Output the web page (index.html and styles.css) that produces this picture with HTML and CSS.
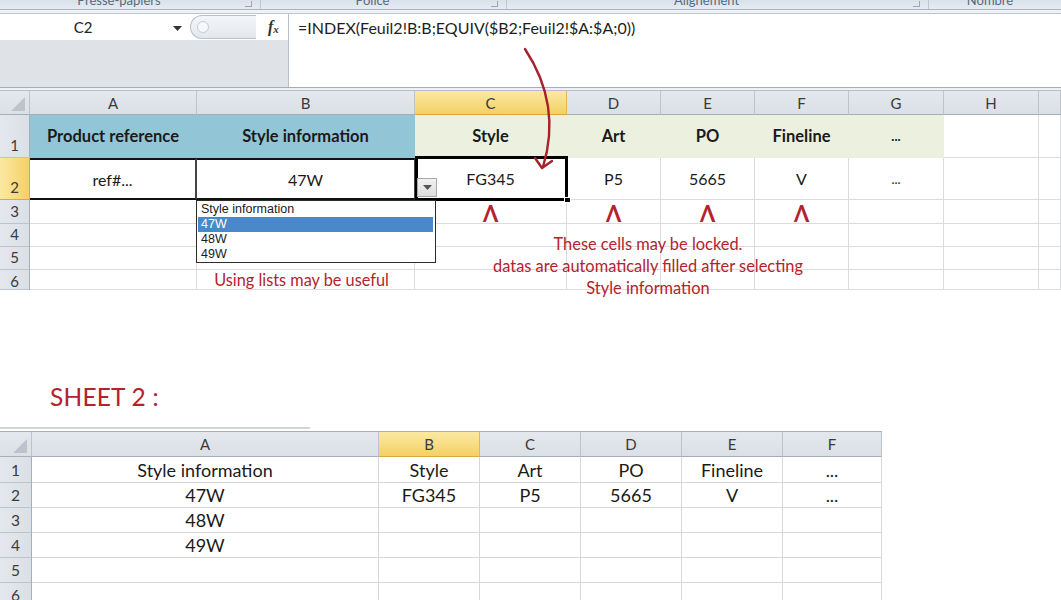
FILE: index.html
```html
<!DOCTYPE html>
<html>
<head>
<meta charset="utf-8">
<link rel="stylesheet" href="styles.css">
</head>
<body>
<div class="page">
  <div class="ribbon">
    <div class="grp g1"><span>Presse-papiers</span><i class="launch"></i></div>
    <div class="grp g2"><span>Police</span><i class="launch"></i></div>
    <div class="grp g3"><span>Alignement</span><i class="launch"></i></div>
    <div class="grp g4"><span>Nombre</span></div>
  </div>
  <div class="ribbon-gap"></div>
  <div class="fbar">
    <div class="fleft">
      <div class="namerow">
        <div class="namebox"><span class="name">C2</span><svg class="nb-caret" width="9" height="5" viewBox="0 0 9 5"><path d="M0 0H9L4.5 5Z" fill="#333"/></svg></div>
        <div class="fxzone">
          <div class="pill"><i class="knob"></i></div>
          <span class="fx">f<sub>x</sub></span>
        </div>
      </div>
    </div>
    <div class="formula">=INDEX(Feuil2!B:B;EQUIV($B2;Feuil2!$A:$A;0))</div>
  </div>
  <div class="fsep"></div>

  <div class="sheet s1">
    <div class="grid g-s1">
      <div class="c h corner"><i class="tri"></i></div>
      <div class="c h">A</div>
      <div class="c h">B</div>
      <div class="c h sel">C</div>
      <div class="c h">D</div>
      <div class="c h">E</div>
      <div class="c h">F</div>
      <div class="c h">G</div>
      <div class="c h">H</div>
      <div class="c h"></div>

      <div class="c r">1</div>
      <div class="c b blue">Product reference</div>
      <div class="c b blue">Style information</div>
      <div class="c b green">Style</div>
      <div class="c b green">Art</div>
      <div class="c b green">PO</div>
      <div class="c b green">Fineline</div>
      <div class="c b green dots">...</div>
      <div class="c"></div>
      <div class="c"></div>

      <div class="c r sel">2</div>
      <div class="c t boxed bx-a">ref#...</div>
      <div class="c t boxed bx-b">47W</div>
      <div class="c t">FG345</div>
      <div class="c t">P5</div>
      <div class="c t">5665</div>
      <div class="c t">V</div>
      <div class="c t dots">...</div>
      <div class="c"></div>
      <div class="c"></div>

      <div class="c r">3</div>
      <div class="c"></div>
      <div class="c"></div>
      <div class="c caret">Λ</div>
      <div class="c caret">Λ</div>
      <div class="c caret">Λ</div>
      <div class="c caret">Λ</div>
      <div class="c"></div>
      <div class="c"></div>
      <div class="c"></div>

      <div class="c r">4</div>
      <div class="c"></div><div class="c"></div><div class="c"></div><div class="c"></div><div class="c"></div><div class="c"></div><div class="c"></div><div class="c"></div><div class="c"></div>

      <div class="c r">5</div>
      <div class="c"></div><div class="c"></div><div class="c"></div><div class="c"></div><div class="c"></div><div class="c"></div><div class="c"></div><div class="c"></div><div class="c"></div>

      <div class="c r r6">6</div>
      <div class="c"></div>
      <div class="c note-cell">Using lists may be useful</div>
      <div class="c"></div><div class="c"></div><div class="c"></div><div class="c"></div><div class="c"></div><div class="c"></div><div class="c"></div>
    </div>

    <div class="selection"><i class="handle"></i></div>
    <div class="dd-btn"><svg width="9" height="5" viewBox="0 0 9 5"><path d="M0 0H9L4.5 5Z" fill="#555"/></svg></div>
    <div class="dd-list">
      <div class="dd-item">Style information</div>
      <div class="dd-item on">47W</div>
      <div class="dd-item">48W</div>
      <div class="dd-item">49W</div>
    </div>
    <div class="note">
      These cells may be locked.<br>
      datas are automatically filled after selecting<br>
      Style information
    </div>
  </div>

  <div class="title2">SHEET 2 :</div>

  <div class="topline2"></div>
  <div class="sheet s2">
    <div class="grid g-s2">
      <div class="c h corner"><i class="tri"></i></div>
      <div class="c h">A</div>
      <div class="c h sel">B</div>
      <div class="c h">C</div>
      <div class="c h">D</div>
      <div class="c h">E</div>
      <div class="c h">F</div>

      <div class="c r">1</div>
      <div class="c v">Style information</div>
      <div class="c v">Style</div>
      <div class="c v">Art</div>
      <div class="c v">PO</div>
      <div class="c v">Fineline</div>
      <div class="c v dots">...</div>

      <div class="c r">2</div>
      <div class="c v">47W</div>
      <div class="c v">FG345</div>
      <div class="c v">P5</div>
      <div class="c v">5665</div>
      <div class="c v">V</div>
      <div class="c v dots">...</div>

      <div class="c r">3</div>
      <div class="c v">48W</div>
      <div class="c"></div><div class="c"></div><div class="c"></div><div class="c"></div><div class="c"></div>

      <div class="c r">4</div>
      <div class="c v">49W</div>
      <div class="c"></div><div class="c"></div><div class="c"></div><div class="c"></div><div class="c"></div>

      <div class="c r">5</div>
      <div class="c"></div><div class="c"></div><div class="c"></div><div class="c"></div><div class="c"></div><div class="c"></div>

      <div class="c r">6</div>
      <div class="c"></div><div class="c"></div><div class="c"></div><div class="c"></div><div class="c"></div><div class="c"></div>
    </div>
  </div>

  <svg class="arrow" width="1061" height="600" viewBox="0 0 1061 600">
    <path d="M525 49 Q562 105 543 167" fill="none" stroke="#a8202a" stroke-width="2.4" stroke-linecap="round"/>
    <path d="M535 158 L542 168 L552 161" fill="none" stroke="#a8202a" stroke-width="2.4" stroke-linecap="round" stroke-linejoin="round"/>
  </svg>
</div>
</body>
</html>
```

FILE: styles.css
```css
* { box-sizing: border-box; }
html, body { margin: 0; padding: 0; background: #fff; }
body { font-family: Lato, "Open Sans", sans-serif; color: #1e1e1e; }
.page { position: relative; width: 1061px; height: 600px; overflow: hidden; }

/* ribbon */
.ribbon {
  height: 10px; display: flex; overflow: hidden;
  background: linear-gradient(#d9e1ea, #e6ebf1);
  border-bottom: 1px solid #aab3be;
}
.grp {
  position: relative; display: flex; justify-content: center; padding-right: 22px;
  border-right: 1px solid #bcc5d0; font-size: 13px; color: #566a83;
}
.grp span { margin-top: -8px; }
.g1 { width: 261px; }
.g2 { width: 246px; }
.g3 { width: 422px; }
.g4 { flex: 1; border-right: none; padding-right: 10px; }
.launch {
  position: absolute; right: 8px; top: 1px; width: 7px; height: 6px;
  border: 1px solid #9aa7b6; border-left: none; border-top: none;
}
.ribbon-gap { height: 4px; background: #eef1f5; border-bottom: 1px solid #bfc6cf; }

/* formula bar */
.fbar { height: 73px; display: flex; background: #fff; }
.fleft {
  width: 289px; background: #dfe3e8; border-right: 1px solid #b9c0c8;
}
.namerow { height: 26px; display: flex; }
.namebox {
  width: 188px; background: #fff; position: relative;
  display: flex; align-items: center; justify-content: center;
}
.name { font-size: 15px; color: #222; margin-left: -22px; }
.nb-caret { position: absolute; right: 6px; top: 12px; }
.fxzone {
  flex: 1; display: flex; align-items: center; background: #fff; position: relative;
}
.pill {
  width: 66px; height: 24px; margin-left: 2px;
  border: 1px solid #b8c0ca; border-right: none; border-radius: 12px 0 0 12px;
  background: linear-gradient(#f4f6f8, #e3e7ec); position: relative;
}
.knob {
  position: absolute; left: 6px; top: 5px; width: 12px; height: 12px;
  border-radius: 50%; border: 1px solid #c5ccd5; background: #f7f8fa;
}
.fx {
  margin-left: 12px; font-family: "Liberation Serif", serif; font-style: italic; font-weight: bold;
  font-size: 16px; color: #333;
}
.fx sub { font-size: 11px; vertical-align: -1px; }
.formula {
  flex: 1; padding: 4px 0 0 9px; font-size: 16px; color: #1e1e1e;
}
.fsep {
  height: 4px; background: #eef0f3;
  border-top: 1px solid #a6aeb8; border-bottom: 1px solid #b7bec7;
}

/* grid common */
.sheet { position: relative; }
.grid { display: grid; }
.c {
  display: flex; align-items: center; justify-content: center;
  border-right: 1px solid #dadcde; border-bottom: 1px solid #dadcde;
  white-space: nowrap; overflow: visible; min-width: 0;
}
.h {
  background: linear-gradient(#e4e8ed, #dbe0e6);
  border-right: 1px solid #bcc3cc; border-bottom: 1px solid #a4afbc;
  font-size: 15px; color: #3a3a3a;
}
.r {
  background: linear-gradient(90deg, #e4e8ed, #dbe0e6);
  border-right: 1px solid #a4afbc; border-bottom: 1px solid #bcc3cc;
  font-size: 15px; color: #3a3a3a;
}
.sel {
  background: linear-gradient(#fbe9a2, #f4d065);
  border-right-color: #e2b84f; border-bottom-color: #d9a93b;
}
.r.sel { background: linear-gradient(90deg, #fbe9a2, #f4d065); border-right-color: #d9a93b; }
.corner { position: relative; }
.tri {
  position: absolute; right: 4px; bottom: 3px; width: 0; height: 0;
  border-left: 14px solid transparent; border-bottom: 14px solid #bcc3cc;
}

/* sheet 1 */
.g-s1 {
  grid-template-columns: 30px 167px 218px 152px 94px 94px 94px 95px 95px 1fr;
  grid-template-rows: 24px 43px 42px 24px 23px 23px 20px;
}
.s1 .r { align-items: flex-end; padding-bottom: 3px; }
.s1 .r.r6 { padding-bottom: 0; align-items: flex-start; padding-top: 2px; }
.b { font-weight: bold; font-size: 16.5px; color: #1a1a1a; }
.blue { background: #92c6d6; border-color: #92c6d6; }
.green { background: #ebf1de; border-color: #ebf1de; }
.t { font-size: 16px; color: #1a1a1a; }
.dots { font-size: 13px; }
.boxed { border-top: 2px solid #111; border-bottom: 2px solid #111; }
.bx-a { border-right: 2px solid #444; }
.bx-b { border-right: 1px solid #444; }
.caret { color: #b3232c; font-weight: bold; font-size: 22px; padding-top: 3px; }
.note-cell { color: #b3232c; font-size: 16.3px; align-items: flex-end; overflow: visible; padding-right: 8px; }

.selection {
  position: absolute; left: 415px; top: 65px; width: 153px; height: 45px;
  border: 3px solid #000;
}
.handle {
  position: absolute; right: -6px; bottom: -5px; width: 7px; height: 6px;
  background: #000; border: 1px solid #fff;
}
.dd-btn {
  position: absolute; left: 417px; top: 87px; width: 20px; height: 19px;
  background: linear-gradient(#f1f1f1, #dedede); border: 1px solid #a9a9a9;
  display: flex; align-items: center; justify-content: center;
}
.dd-list {
  position: absolute; left: 196px; top: 109px; width: 240px; height: 63px;
  background: #fff; border: 1px solid #2c2c2c; padding: 1px 2px 0 1px;
  font-family: "Liberation Sans", Arial, sans-serif; font-size: 12.5px; color: #1a1a1a;
}
.dd-item { height: 15px; line-height: 15px; padding-left: 3px; }
.dd-item.on { background: #4a89c9; color: #fff; }
.note {
  position: absolute; left: 448px; top: 142px; width: 400px;
  text-align: center; color: #b3232c; font-size: 16.4px; line-height: 22px;
}

/* sheet 2 */
.title2 {
  height: 137px; padding: 92px 0 0 50px;
  font-size: 24.5px; color: #b3232c; letter-spacing: 0.2px;
}
.topline2 { width: 310px; height: 2px; background: #d2d6dc; }
.s2 { width: 882px; border-top: 1px solid #a7afb9; margin-top: 2px; }
.g-s2 {
  grid-template-columns: 32px 347px 101px 101px 101px 101px 99px;
  grid-template-rows: 25px 26px 25px 25px 25px 25px 25px;
}
.s2 .c { border-color: #d8d8d8; }
.s2 .h { border-right-color: #bcc3cc; border-bottom-color: #a4afbc; }
.s2 .h.sel { border-right-color: #e2b84f; border-bottom-color: #d9a93b; }
.s2 .r { border-right-color: #a4afbc; border-bottom-color: #bcc3cc; font-size: 15.5px; }
.v { font-size: 18px; color: #1a1a1a; }

.arrow { position: absolute; left: 0; top: 0; pointer-events: none; }
```
